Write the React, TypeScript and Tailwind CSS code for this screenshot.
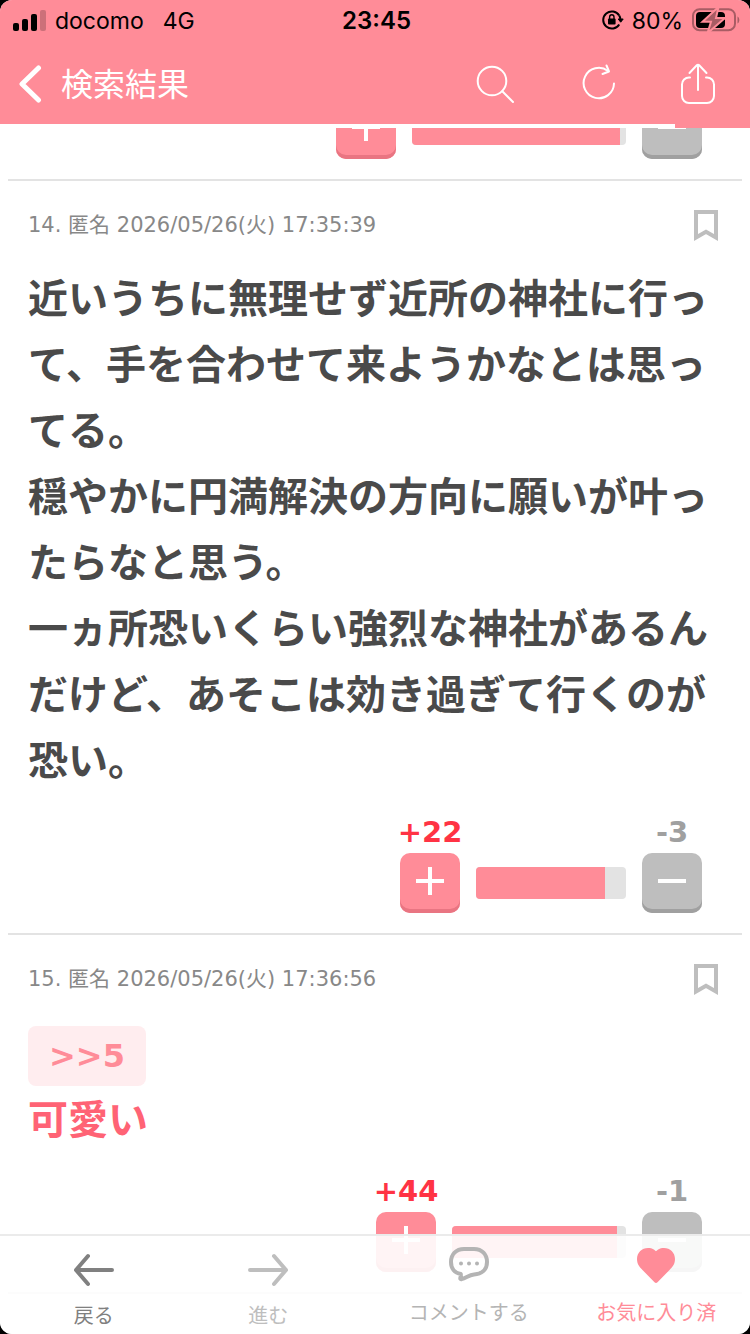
import type { ReactNode } from 'react';

type Vote = {
    plus?: number;
    minus?: number;
    ratio: number;
    barClass: string;
};

type Comment = {
    id: number;
    date: string;
    vote: Vote;
    replyTo?: number;
    body: string;
    bodyClass: string;
};

const previousVote: Vote = { ratio: 97, barClass: 'w-[214px]' };

const comments: Comment[] = [
    {
        id: 14,
        date: '2026/05/26(火) 17:35:39',
        body: '近いうちに無理せず近所の神社に行って、手を合わせて来ようかなとは思ってる。\n穏やかに円満解決の方向に願いが叶ったらなと思う。\n一ヵ所恐いくらい強烈な神社があるんだけど、あそこは効き過ぎて行くのが恐い。',
        bodyClass: 'text-[#4a4a4a]',
        vote: { plus: 22, minus: 3, ratio: 86, barClass: 'w-[150px]' },
    },
    {
        id: 15,
        date: '2026/05/26(火) 17:36:56',
        replyTo: 5,
        body: '可愛い',
        bodyClass: 'text-[#ff6375]',
        vote: { plus: 44, minus: 1, ratio: 95, barClass: 'w-[174px]' },
    },
];

function StatusBar() {
    return (
        <div className="grid h-10 grid-cols-3 items-center pr-[10px] pl-[13px] font-['Inter',sans-serif] text-[23px] text-black">
            <div className="flex items-center">
                <svg width="33" height="21" viewBox="0 0 33 21" aria-hidden="true">
                    <rect x="0" y="13" width="6" height="8" rx="2" />
                    <rect x="9" y="9" width="6" height="12" rx="2" />
                    <rect x="18" y="4" width="6" height="17" rx="2" />
                    <rect x="27" y="0" width="6" height="21" rx="2" opacity=".2" />
                </svg>
                <span className="ml-[9px] pt-0.5">docomo</span>
                <span className="ml-[19px] pt-0.5">4G</span>
            </div>
            <span className="pt-0.5 text-center text-2xl font-semibold">23:45</span>
            <div className="flex items-center justify-end">
                <svg width="22" height="20" viewBox="0 0 22 20" fill="none" stroke="#000" strokeWidth="2" aria-hidden="true">
                    <path d="M17.2 5.6A8.6 8.6 0 1 0 17.2 14.400" />
                    <path d="M17.2 5.6A8.600 8.600 0 0 1 18.400 9" />
                    <path d="M16.200 9h5l-2.500 3.200z" fill="#000" strokeWidth="1" />
                    <rect x="6" y="8.500" width="7.600" height="6" rx="1" fill="#000" stroke="none" />
                    <path d="M7.600 9V7a2.200 2.200 0 0 1 4.400 0v2" strokeWidth="1.400" />
                </svg>
                <span className="mr-2 ml-2 pt-0.5">80%</span>
                <svg width="49" height="24" viewBox="0 0 49 24" aria-hidden="true">
                    <rect x="2" y="1.200" width="42" height="21" rx="6.500" fill="none" stroke="#a85c64" strokeWidth="2" />
                    <path d="M46.500 8.500c2.400 1.200 2.400 5.800 0 7z" fill="#a85c64" />
                    <rect x="5" y="4" width="29" height="16" rx="4" />
                    <path d="M27.500-1L11.500 13.700h8.500l-3.500 11.500L34 10h-9z" fill="#a85c64" stroke="#ff8c98" strokeWidth="2" />
                </svg>
            </div>
        </div>
    );
}

function NavBar() {
    return (
        <header className="flex h-[84px] items-center pt-1 pr-[34px] pl-[17px] text-white">
            <button type="button" className="flex items-center" aria-label="検索結果に戻る">
                <svg width="26" height="38" viewBox="0 0 26 38" fill="none" stroke="currentColor" strokeWidth="5" strokeLinecap="round" strokeLinejoin="round" aria-hidden="true">
                    <path d="M21.500 3L5 19l16.500 16" />
                </svg>
            </button>
            <h1 className="ml-[18px] flex-1 pb-1 text-[32px] leading-10">検索結果</h1>
            <div className="flex items-center">
                <button type="button" aria-label="検索">
                    <svg width="40" height="40" viewBox="0 0 40 40" fill="none" stroke="currentColor" strokeWidth="2" strokeLinecap="round" aria-hidden="true">
                        <circle cx="17" cy="17" r="14.300" />
                        <path d="M27.300 27.300L38 38" />
                    </svg>
                </button>
                <button type="button" className="ml-16" aria-label="再読み込み">
                    <svg width="40" height="40" viewBox="0 0 40 40" fill="none" stroke="currentColor" strokeWidth="2" strokeLinecap="round" strokeLinejoin="round" aria-hidden="true">
                        <path d="M35 19.500A15.200 15.200 0 1 1 29 7" />
                        <path d="M27.500 1.500l2.500 6-6.500 2.500" />
                    </svg>
                </button>
                <button type="button" className="ml-[61px]" aria-label="共有">
                    <svg width="36" height="44" viewBox="0 0 36 44" fill="none" stroke="currentColor" strokeWidth="2" strokeLinecap="round" strokeLinejoin="round" aria-hidden="true">
                        <path d="M10 15.500H9a7 7 0 0 0-7 7V34a7 7 0 0 0 7 7h18a7 7 0 0 0 7-7V22.500a7 7 0 0 0-7-7h-1" />
                        <path d="M18 28V3M9.500 11L16.800 3.300q1.200-1.200 2.400 0L26.500 11" />
                    </svg>
                </button>
            </div>
        </header>
    );
}

function VoteButton({ kind }: { kind: 'plus' | 'minus' }) {
    const color = kind === 'plus' ? 'bg-[#ff8c98] shadow-[inset_0_-4px_#e97582]' : 'bg-[#bebebe] shadow-[inset_0_-4px_#a0a0a0]';
    return (
        <button type="button" aria-label={kind === 'plus' ? 'プラス' : 'マイナス'} className={`flex size-[60px] items-center justify-center rounded-[10px] pb-1 ${color}`}>
            <svg width="28" height="28" viewBox="0 0 28 28" stroke="#fff" strokeWidth="4" aria-hidden="true">
                <path d={kind === 'plus' ? 'M0 14h28M14 0v28' : 'M0 14h28'} />
            </svg>
        </button>
    );
}

function VoteRow({ vote }: { vote: Vote }) {
    return (
        <div className="flex items-end justify-end gap-4 pr-10 font-['DejaVu_Sans',sans-serif] text-[29px] leading-[34px] font-bold">
            <div className="flex w-[60px] flex-col items-center gap-1">
                {vote.plus !== undefined && <span className="text-[#ff3344]">+{vote.plus}</span>}
                <VoteButton kind="plus" />
            </div>
            <div className={`mb-3.5 h-8 overflow-hidden rounded bg-[#e3e3e3] ${vote.barClass}`}>
                <div className="h-full bg-[#ff8c98]" style={{ width: `${vote.ratio}%` }} />
            </div>
            <div className="flex w-[60px] flex-col items-center gap-1">
                {vote.minus !== undefined && <span className="text-[#a0a0a0]">-{vote.minus}</span>}
                <VoteButton kind="minus" />
            </div>
        </div>
    );
}

function CommentItem({ comment }: { comment: Comment }) {
    return (
        <article className="mx-2 border-b-2 border-[#e3e3e3] pt-[29px] pb-5">
            <div className="flex h-[30px] items-center justify-between pr-6 pl-5">
                <p className="font-['DejaVu_Sans','Noto_Sans_CJK_JP',sans-serif] text-[21px] leading-[30px] text-[#888]">
                    {comment.id}. 匿名 {comment.date}
                </p>
                <button type="button" aria-label="ブックマーク">
                    <svg width="24" height="32" viewBox="0 0 24 32" fill="none" stroke="#bebebe" strokeWidth="4" aria-hidden="true">
                        <path d="M2 3h20v25.500l-10-5.700-10 5.700z" />
                    </svg>
                </button>
            </div>
            <div className={comment.replyTo ? 'mt-8 px-5' : 'mt-[23px] px-5'}>
                {comment.replyTo && (
                    <a href={`#comment-${comment.replyTo}`} className="-mb-0.5 flex h-[60px] w-fit items-center rounded-lg bg-[#ffedef] px-[21px] font-['DejaVu_Sans',sans-serif] text-[32px] font-bold text-[#ff8c98]">
                        &gt;&gt;{comment.replyTo}
                    </a>
                )}
                <p className={`text-[40px] leading-[66px] font-bold whitespace-pre-line ${comment.bodyClass}`}>{comment.body}</p>
            </div>
            <div className="mt-6">
                <VoteRow vote={comment.vote} />
            </div>
        </article>
    );
}

function ToolbarButton({ label, className, children }: { label: string; className: string; children: ReactNode }) {
    return (
        <button type="button" className={`flex flex-col items-center text-xl leading-7 ${className}`}>
            {children}
            <span>{label}</span>
        </button>
    );
}

function Toolbar() {
    return (
        <nav className="absolute inset-x-0 bottom-0 grid h-[100px] grid-cols-4 border-t-2 border-[#ebebeb] bg-white/90 bg-clip-padding">
            <ToolbarButton label="戻る" className="gap-[11px] pt-3.5 text-[#808080]">
                <svg width="40" height="40" viewBox="0 0 40 40" fill="none" stroke="currentColor" strokeWidth="4" strokeLinecap="round" strokeLinejoin="round" aria-hidden="true">
                    <path d="M38 20H2M14 6L2 20l12 14" />
                </svg>
            </ToolbarButton>
            <ToolbarButton label="進む" className="gap-[11px] pt-3.5 pr-[26px] text-[#bebebe]">
                <svg width="40" height="40" viewBox="0 0 40 40" fill="none" stroke="currentColor" strokeWidth="4" strokeLinecap="round" strokeLinejoin="round" aria-hidden="true">
                    <path d="M2 20h36M26 6l12 14-12 14" />
                </svg>
            </ToolbarButton>
            <ToolbarButton label="コメントする" className="gap-[13px] pt-[9px] text-[#b4b4b4]">
                <svg width="40" height="40" viewBox="0 0 40 40" fill="none" stroke="currentColor" strokeWidth="4" strokeLinejoin="round" aria-hidden="true">
                    <path d="M15 4h10c8 0 13 5.500 13 13 0 8-5.500 12-13 12.500-5 .4-7.500 3.200-12.500 4.700-.8.200-1.300-.2-1.200-1 .2-1.500 1-3 .4-4.200C5.500 28 2 23.500 2 17 2 9.500 7 4 15 4z" />
                    <g fill="currentColor" stroke="none">
                        <circle cx="12" cy="18.500" r="2" />
                        <circle cx="20" cy="18.500" r="2" />
                        <circle cx="28" cy="18.500" r="2" />
                    </g>
                </svg>
            </ToolbarButton>
            <ToolbarButton label="お気に入り済" className="gap-[13px] pt-[9px] text-[#ff8c98]">
                <svg width="40" height="40" viewBox="0 0 40 40" fill="currentColor" aria-hidden="true">
                    <path d="M20 6.200C17 3.500 14.500 3 12 3 6 3 1 7.500 1 14c0 5 2.500 8 5.500 11l12 12.300q1.500 1.400 3 0l12-12.300c3-3 5.500-6 5.500-11 0-6.500-5-11-11-11-2.500 0-5 .5-8 3.200z" />
                </svg>
            </ToolbarButton>
        </nav>
    );
}

export default function App() {
    return (
        <div className="bg-black font-['Noto_Sans_CJK_JP',sans-serif]">
            <div className="relative flex h-screen flex-col overflow-hidden rounded-xl bg-white">
                <div className="shrink-0 bg-[#ff8c98]">
                    <StatusBar />
                    <NavBar />
                    {/* page load progress */}
                    <div className="h-1 w-9/10 bg-white" />
                </div>
                <main className="flex-1 overflow-hidden">
                    <div className="mx-2 flex h-[53px] flex-col justify-end overflow-hidden border-b-2 border-[#e3e3e3] pb-5">
                        <VoteRow vote={previousVote} />
                    </div>
                    {comments.map((comment) => (
                        <CommentItem key={comment.id} comment={comment} />
                    ))}
                </main>
                <Toolbar />
            </div>
        </div>
    );
}
